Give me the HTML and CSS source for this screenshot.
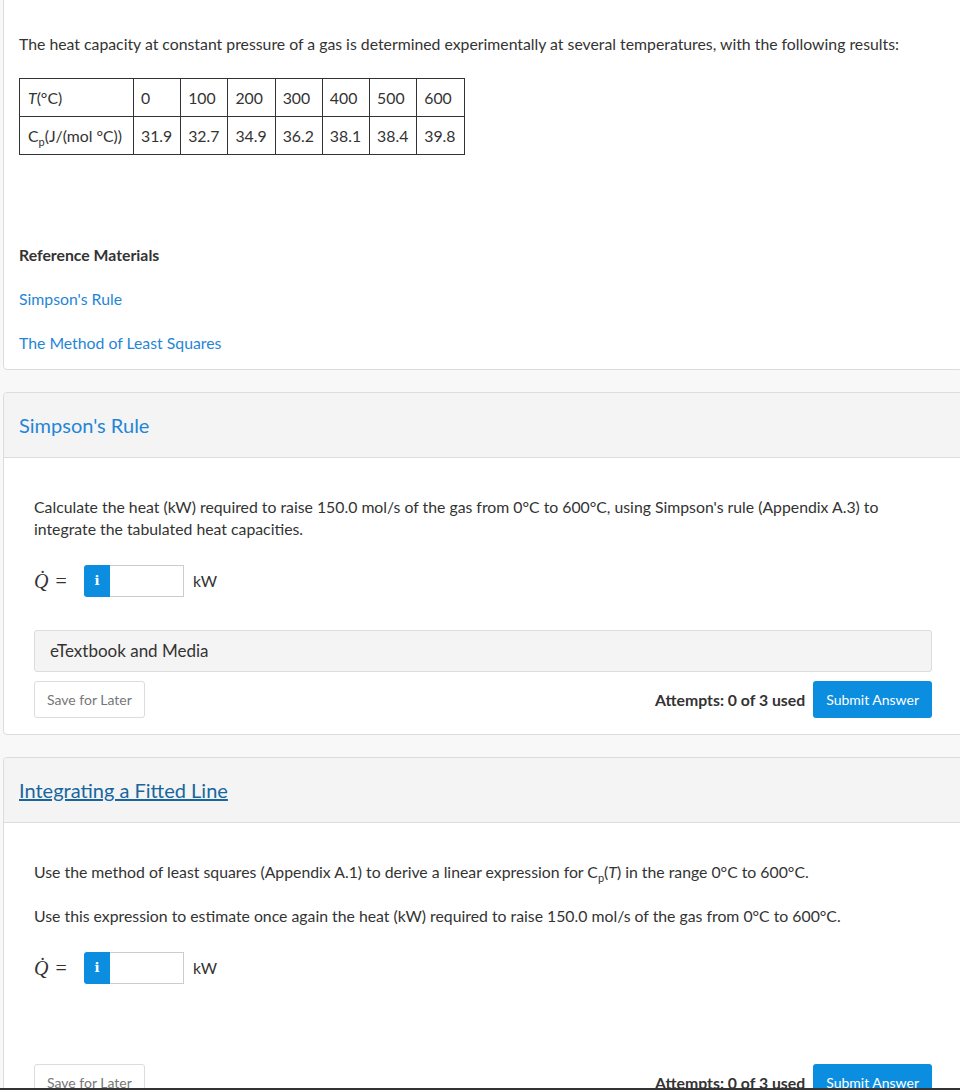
FILE: index.html
```html
<!DOCTYPE html>
<html lang="en">
<head>
  <meta charset="UTF-8">
  <title>Assignment</title>
  <link rel="stylesheet" href="styles.css">
</head>
<body>
  <div class="page">
    <!-- Question stem -->
    <div class="card card-first">
      <div class="card-body stem">
        <p>The heat capacity at constant pressure of a gas is determined experimentally at several temperatures, with the following results:</p>
        <table class="data-table">
          <tr>
            <td><i>T</i>(°C)</td><td>0</td><td>100</td><td>200</td><td>300</td><td>400</td><td>500</td><td>600</td>
          </tr>
          <tr>
            <td>C<sub>p</sub>(J/(mol °C))</td><td>31.9</td><td>32.7</td><td>34.9</td><td>36.2</td><td>38.1</td><td>38.4</td><td>39.8</td>
          </tr>
        </table>
        <h4 class="ref-title">Reference Materials</h4>
        <a class="ref-link" href="#">Simpson's Rule</a>
        <a class="ref-link" href="#">The Method of Least Squares</a>
      </div>
    </div>

    <!-- Part 1 -->
    <div class="card">
      <div class="card-header">
        <a class="part-title" href="#">Simpson's Rule</a>
      </div>
      <div class="card-body part">
        <p>Calculate the heat (kW) required to raise 150.0 mol/s of the gas from 0°C to 600°C, using Simpson's rule (Appendix A.3) to integrate the tabulated heat capacities.</p>
        <div class="answer-row">
          <span class="math">Q̇ <span class="eq">=</span></span>
          <span class="info-btn">i</span>
          <input class="answer-input" type="text">
          <span class="unit">kW</span>
        </div>
        <div class="media-bar"><span class="media-label">eTextbook and Media</span></div>
        <div class="actions">
          <button class="btn-save">Save for Later</button>
          <div class="actions-right">
            <span class="attempts">Attempts: 0 of 3 used</span>
            <button class="btn-submit">Submit Answer</button>
          </div>
        </div>
      </div>
    </div>

    <!-- Part 2 -->
    <div class="card">
      <div class="card-header">
        <a class="part-title part-title-active" href="#">Integrating a Fitted Line</a>
      </div>
      <div class="card-body part">
        <p>Use the method of least squares (Appendix A.1) to derive a linear expression for C<sub>p</sub>(<i>T</i>) in the range 0°C to 600°C.</p>
        <p>Use this expression to estimate once again the heat (kW) required to raise 150.0 mol/s of the gas from 0°C to 600°C.</p>
        <div class="answer-row">
          <span class="math">Q̇ <span class="eq">=</span></span>
          <span class="info-btn">i</span>
          <input class="answer-input" type="text">
          <span class="unit">kW</span>
        </div>
        <div class="actions actions-spaced">
          <button class="btn-save">Save for Later</button>
          <div class="actions-right">
            <span class="attempts">Attempts: 0 of 3 used</span>
            <button class="btn-submit">Submit Answer</button>
          </div>
        </div>
      </div>
    </div>
  </div>
  <div class="window-edge"></div>
</body>
</html>
```

FILE: styles.css
```css
* {
  margin: 0;
  padding: 0;
  box-sizing: border-box;
}

body {
  font-family: Lato, 'Liberation Sans', sans-serif;
  font-size: 15.8px;
  color: #333;
  background-color: #f8f8f8;
  overflow: hidden;
}

.page {
  margin-left: 3px;
  width: 960px;
}

.card {
  background-color: white;
  border: 1px solid #dcdcdc;
  border-radius: 4px;
  margin-bottom: 22px;
}

.card-first {
  margin-top: -1px;
  border-top-left-radius: 0;
}

.card-body {
  line-height: 22px;
}

.stem {
  padding: 33px 15px 15px 15px;
}

.data-table {
  border-collapse: collapse;
  margin-top: 23px;
  font-size: 15.8px;
}

.data-table td {
  border: 1px solid #333;
  padding: 8px 11px 8px 8px;
  line-height: 21px;
}

.data-table td + td {
  padding: 8px 8px 8px 7px;
  width: 47px;
}

sub {
  font-size: 11px;
  line-height: 0;
}

.ref-title {
  font-size: 15.8px;
  font-weight: bold;
  margin-top: 89px;
  line-height: 22px;
}

.ref-link {
  display: block;
  color: #1f86d6;
  text-decoration: none;
  margin-top: 22px;
}

.card-header {
  background-color: #f4f4f4;
  border-bottom: 1px solid #dcdcdc;
  padding: 19px 15px;
  border-radius: 4px 4px 0 0;
}

.part-title {
  font-size: 20px;
  line-height: 26px;
  color: #1f86d6;
  text-decoration: none;
}

.part-title-active {
  color: #17669e;
  text-decoration: underline;
}

.part {
  padding: 38px 30px 16px 30px;
}

.part p + p {
  margin-top: 22px;
}

.answer-row {
  display: flex;
  align-items: center;
  margin-top: 25px;
  height: 32px;
}

.math {
  font-family: 'Liberation Serif', 'DejaVu Serif', serif;
  font-style: italic;
  font-size: 20px;
  width: 50px;
}

.math .eq {
  font-style: normal;
  margin-left: 2px;
}

.info-btn {
  width: 26px;
  height: 32px;
  background-color: #0b8de0;
  color: white;
  font-family: 'DejaVu Serif', serif;
  font-weight: bold;
  font-size: 13px;
  display: flex;
  align-items: center;
  justify-content: center;
  border-radius: 3px 0 0 3px;
}

.answer-input {
  width: 74px;
  height: 32px;
  border: 1px solid #ccc;
  border-left: none;
  outline: none;
}

.unit {
  margin-left: 9px;
}

.media-bar {
  margin-top: 33px;
  background-color: #f4f4f4;
  border: 1px solid #dcdcdc;
  border-radius: 3px;
  height: 42px;
  padding-left: 15px;
  display: flex;
  align-items: center;
}

.media-label {
  font-size: 17px;
}

.actions {
  margin-top: 9px;
  display: flex;
  justify-content: space-between;
  align-items: center;
}

.actions-spaced {
  margin-top: 80px;
}

.actions-right {
  display: flex;
  align-items: center;
  gap: 8px;
}

.btn-save {
  font-family: Lato, 'Liberation Sans', sans-serif;
  background-color: white;
  border: 1px solid #dcdcdc;
  border-radius: 3px;
  color: #777;
  font-size: 14px;
  height: 37px;
  padding: 0 12px;
}

.attempts {
  font-weight: bold;
  font-size: 15.8px;
  color: #333;
}

.btn-submit {
  font-family: Lato, 'Liberation Sans', sans-serif;
  background-color: #0b8de0;
  border: none;
  border-radius: 3px;
  color: white;
  font-size: 14px;
  height: 37px;
  padding: 0 13px;
}

.window-edge {
  position: fixed;
  left: 0;
  right: 0;
  bottom: 0;
  height: 2px;
  background-color: #333;
}
```
